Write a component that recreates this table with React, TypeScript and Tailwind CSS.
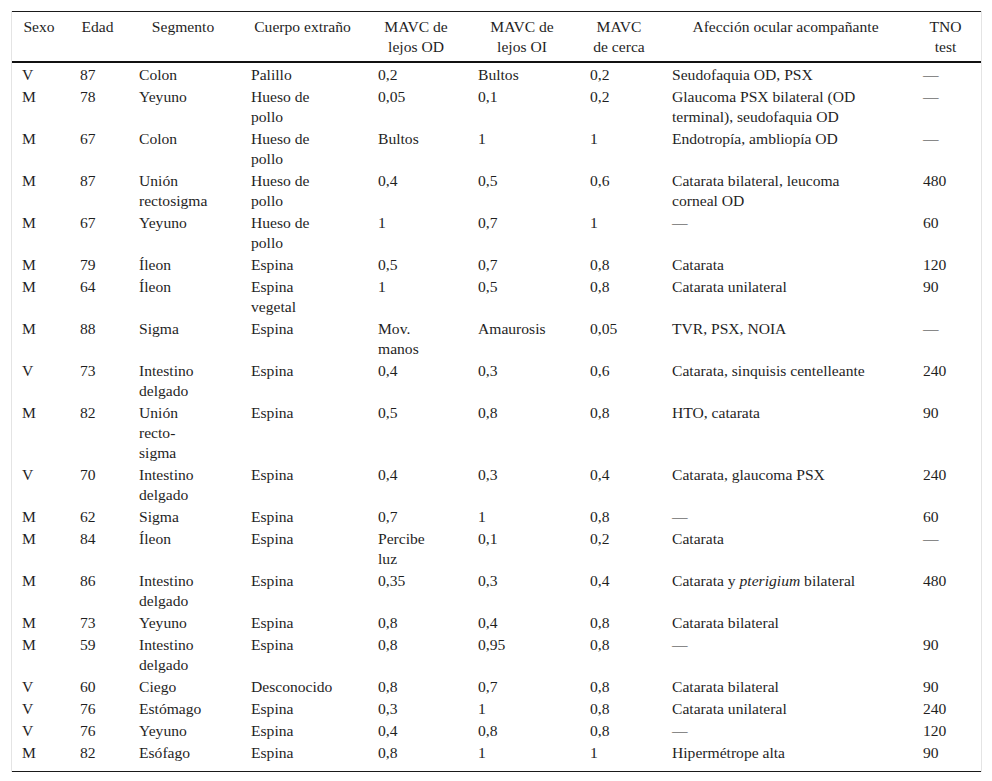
type Row = string[];

// "|" marks a forced line break inside a cell
const rows: Row[] = [
  ['V', '87', 'Colon', 'Palillo', '0,2', 'Bultos', '0,2', 'Seudofaquia OD, PSX', '—'],
  ['M', '78', 'Yeyuno', 'Hueso de|pollo', '0,05', '0,1', '0,2', 'Glaucoma PSX bilateral (OD|terminal), seudofaquia OD', '—'],
  ['M', '67', 'Colon', 'Hueso de|pollo', 'Bultos', '1', '1', 'Endotropía, ambliopía OD', '—'],
  ['M', '87', 'Unión|rectosigma', 'Hueso de|pollo', '0,4', '0,5', '0,6', 'Catarata bilateral, leucoma|corneal OD', '480'],
  ['M', '67', 'Yeyuno', 'Hueso de|pollo', '1', '0,7', '1', '—', '60'],
  ['M', '79', 'Íleon', 'Espina', '0,5', '0,7', '0,8', 'Catarata', '120'],
  ['M', '64', 'Íleon', 'Espina|vegetal', '1', '0,5', '0,8', 'Catarata unilateral', '90'],
  ['M', '88', 'Sigma', 'Espina', 'Mov.|manos', 'Amaurosis', '0,05', 'TVR, PSX, NOIA', '—'],
  ['V', '73', 'Intestino|delgado', 'Espina', '0,4', '0,3', '0,6', 'Catarata, sinquisis centelleante', '240'],
  ['M', '82', 'Unión|recto-|sigma', 'Espina', '0,5', '0,8', '0,8', 'HTO, catarata', '90'],
  ['V', '70', 'Intestino|delgado', 'Espina', '0,4', '0,3', '0,4', 'Catarata, glaucoma PSX', '240'],
  ['M', '62', 'Sigma', 'Espina', '0,7', '1', '0,8', '—', '60'],
  ['M', '84', 'Íleon', 'Espina', 'Percibe|luz', '0,1', '0,2', 'Catarata', '—'],
  ['M', '86', 'Intestino|delgado', 'Espina', '0,35', '0,3', '0,4', '*pterigium*', '480'],
  ['M', '73', 'Yeyuno', 'Espina', '0,8', '0,4', '0,8', 'Catarata bilateral', ''],
  ['M', '59', 'Intestino|delgado', 'Espina', '0,8', '0,95', '0,8', '—', '90'],
  ['V', '60', 'Ciego', 'Desconocido', '0,8', '0,7', '0,8', 'Catarata bilateral', '90'],
  ['V', '76', 'Estómago', 'Espina', '0,3', '1', '0,8', 'Catarata unilateral', '240'],
  ['V', '76', 'Yeyuno', 'Espina', '0,4', '0,8', '0,8', '—', '120'],
  ['M', '82', 'Esófago', 'Espina', '0,8', '1', '1', 'Hipermétrope alta', '90'],
];

const headers = [
  'Sexo',
  'Edad',
  'Segmento',
  'Cuerpo extraño',
  'MAVC de|lejos OD',
  'MAVC de|lejos OI',
  'MAVC|de cerca',
  'Afección ocular acompañante',
  'TNO|test',
];

function Lines({ text }: { text: string }) {
  if (text === '*pterigium*') {
    return (
      <>
        Catarata y <i>pterigium</i> bilateral
      </>
    );
  }
  const parts = text.split('|');
  return (
    <>
      {parts.map((p, i) => (
        <span key={i}>
          {i > 0 && <br />}
          {p}
        </span>
      ))}
    </>
  );
}

export default function App() {
  return (
    <div className="min-h-screen bg-white pt-[11px] font-[family-name:Liberation_Serif,Times_New_Roman,serif] text-[15.6px] leading-[20px] text-[#1f1f1f]">
      <div className="ml-[11px] w-[971px] border-x border-[#e4e4e4]">
        <table className="w-full table-fixed border-t border-b border-[#1a1a1a]">
          <colgroup>
            <col className="w-[57px]" />
            <col className="w-[59px]" />
            <col className="w-[112px]" />
            <col className="w-[127px]" />
            <col className="w-[100px]" />
            <col className="w-[112px]" />
            <col className="w-[82px]" />
            <col className="w-[251px]" />
            <col className="w-[69px]" />
          </colgroup>
          <thead>
            <tr>
              {headers.map((h, i) => (
                <th
                  key={i}
                  className={`border-b-2 border-[#111] pt-[5px] pb-[4px] pr-[13px] text-center align-top font-normal whitespace-nowrap ${
                    i === 0 ? 'pl-[10px]' : 'pl-[11px]'
                  } ${h.includes('|') ? '' : 'h-[49px]'}`}
                >
                  <Lines text={h} />
                </th>
              ))}
            </tr>
          </thead>
          <tbody>
            {rows.map((r, ri) => (
              <tr key={ri}>
                {r.map((c, ci) => (
                  <td
                    key={ci}
                    className={`pt-[2px] pr-[4px] text-left align-top whitespace-nowrap ${
                      ci === 0 ? 'pl-[10px]' : 'pl-[11px]'
                    } ${ri === rows.length - 1 ? 'pb-[8px]' : 'pb-0'}`}
                  >
                    <Lines text={c} />
                  </td>
                ))}
              </tr>
            ))}
          </tbody>
        </table>
      </div>
    </div>
  );
}
